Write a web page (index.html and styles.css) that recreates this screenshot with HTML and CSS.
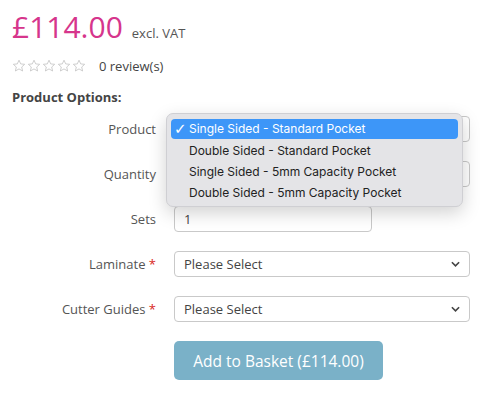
FILE: index.html
```html
<!DOCTYPE html>
<html>
<head>
<meta charset="utf-8">
<link rel="stylesheet" href="styles.css">
</head>
<body>
<div class="page">
  <div class="price-line">
    <span class="price">£114.00</span>
    <span class="vat">excl. VAT</span>
  </div>
  <div class="rating">
    <span class="stars">
      <svg viewBox="0 0 14 14" class="star"><path d="M7 1.2l1.7 3.7 4 .4-3 2.7.9 4-3.6-2.1-3.6 2.1.9-4-3-2.7 4-.4z"/></svg>
      <svg viewBox="0 0 14 14" class="star"><path d="M7 1.2l1.7 3.7 4 .4-3 2.7.9 4-3.6-2.1-3.6 2.1.9-4-3-2.7 4-.4z"/></svg>
      <svg viewBox="0 0 14 14" class="star"><path d="M7 1.2l1.7 3.7 4 .4-3 2.7.9 4-3.6-2.1-3.6 2.1.9-4-3-2.7 4-.4z"/></svg>
      <svg viewBox="0 0 14 14" class="star"><path d="M7 1.2l1.7 3.7 4 .4-3 2.7.9 4-3.6-2.1-3.6 2.1.9-4-3-2.7 4-.4z"/></svg>
      <svg viewBox="0 0 14 14" class="star"><path d="M7 1.2l1.7 3.7 4 .4-3 2.7.9 4-3.6-2.1-3.6 2.1.9-4-3-2.7 4-.4z"/></svg>
    </span>
    <span class="reviews">0 review(s)</span>
  </div>
  <h3 class="options-title">Product Options:</h3>
  <div class="form">
    <label class="label">Product</label>
    <div class="select"><span></span><svg class="chev" viewBox="0 0 10 6"><path d="M1 1l4 4 4-4"/></svg></div>

    <label class="label">Quantity</label>
    <div class="select"><span></span><svg class="chev" viewBox="0 0 10 6"><path d="M1 1l4 4 4-4"/></svg></div>

    <label class="label">Sets</label>
    <div class="input">1</div>

    <label class="label">Laminate <span class="req">*</span></label>
    <div class="select"><span>Please Select</span><svg class="chev" viewBox="0 0 10 6"><path d="M1 1l4 4 4-4"/></svg></div>

    <label class="label">Cutter Guides <span class="req">*</span></label>
    <div class="select"><span>Please Select</span><svg class="chev" viewBox="0 0 10 6"><path d="M1 1l4 4 4-4"/></svg></div>

    <span></span>
    <div><button class="basket">Add to Basket (£114.00)</button></div>
  </div>

  <div class="popup">
    <div class="opt active"><span class="check">✓</span>Single Sided - Standard Pocket</div>
    <div class="opt">Double Sided - Standard Pocket</div>
    <div class="opt">Single Sided - 5mm Capacity Pocket</div>
    <div class="opt">Double Sided - 5mm Capacity Pocket</div>
  </div>
</div>
</body>
</html>
```
FILE: styles.css
```css
* { box-sizing: border-box; }
html, body { margin: 0; padding: 0; background: #fff; }
body { font-family: "Open Sans", "Liberation Sans", sans-serif; color: #555; }
.page { position: relative; padding: 8px 12px 0 12px; width: 492px; height: 401px; }

.price-line { display: flex; align-items: baseline; height: 38px; }
.price { font-size: 30px; color: #d6358c; line-height: 38px; }
.vat { font-size: 13px; color: #555; margin-left: 9px; }

.rating { display: flex; align-items: center; margin-top: 11px; height: 18px; }
.stars { display: flex; gap: 1px; }
.star { width: 14px; height: 14px; fill: none; stroke: #c8c8c8; stroke-width: 0.9; }
.reviews { font-size: 13px; color: #444; margin-left: 13px; }

.options-title { font-size: 13px; font-weight: 700; color: #444; margin: 13px 0 0 0; line-height: 18px; }

.form { display: grid; grid-template-columns: 144px 296px; column-gap: 18px; row-gap: 19px; margin-top: 10px; align-items: center; }
.label { font-size: 13px; color: #555; text-align: right; line-height: 26px; }
.req { color: #d9261c; }

.select, .input { height: 26px; border: 1px solid #c9c9c9; border-radius: 4px; background: #fff; font-size: 13px; color: #444; display: flex; align-items: center; padding: 0 9px; }
.select { justify-content: space-between; }
.input { width: 198px; }
.chev { width: 9px; height: 6px; fill: none; stroke: #444; stroke-width: 1.8; }

.basket { width: 209px; height: 39px; border: none; border-radius: 5px; background: #7ab1c8; color: #fff; font-family: "Open Sans", "Liberation Sans", sans-serif; font-size: 15.5px; padding: 0; }

.popup { position: absolute; left: 166px; top: 113px; width: 297px; height: 94px; background: #e4e4e7; border: 1px solid #cfcfd3; border-radius: 7px; box-shadow: 0 6px 18px rgba(0,0,0,0.18); padding: 5px 4px; font-family: "Inter", "Liberation Sans", sans-serif; font-size: 12px; color: #222; }
.opt { height: 21px; line-height: 21px; padding-left: 18px; position: relative; }
.opt.active { background: #3d96f8; color: #fff; border-radius: 4px; height: 20px; line-height: 20px; margin-bottom: 1px; }
.check { position: absolute; left: 3px; top: 0; font-size: 15px; font-family: "DejaVu Sans", sans-serif; }
```
